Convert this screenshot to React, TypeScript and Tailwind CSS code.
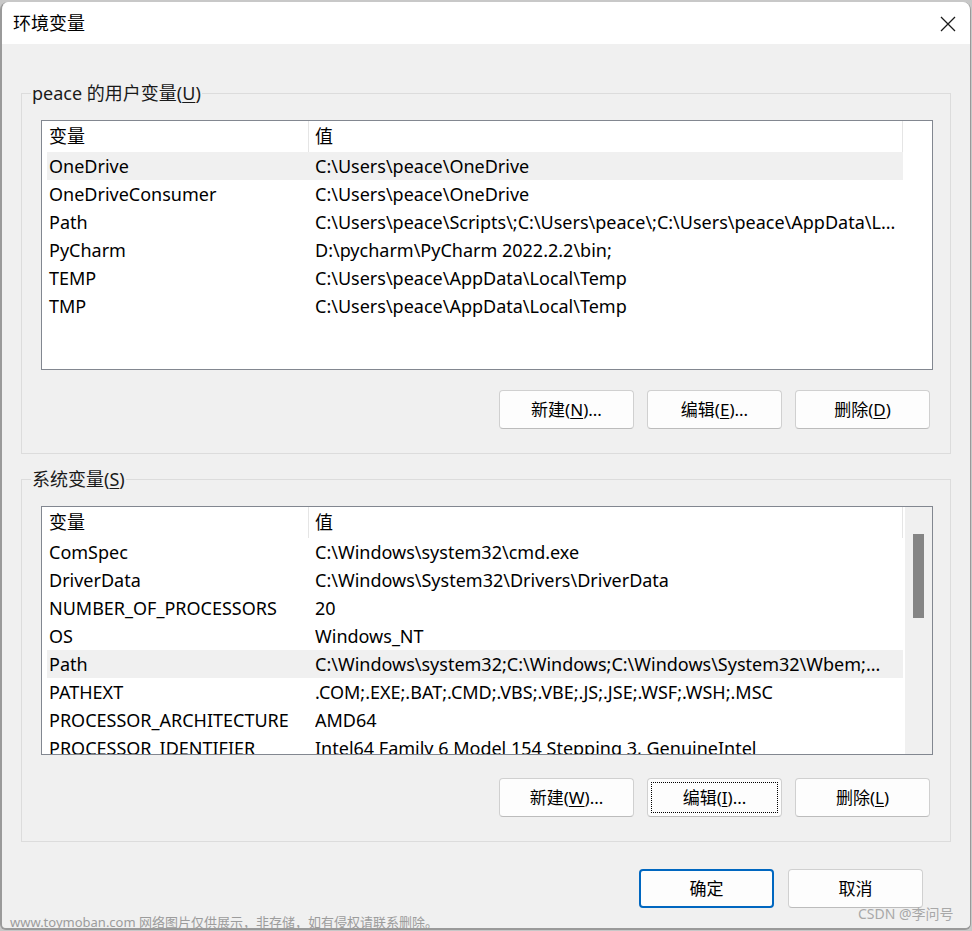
import React from "react";

const font = { fontFamily: '"Noto Sans", "Noto Sans CJK SC", sans-serif' };

type Row = { name: string; value: string };

const userVars: Row[] = [
  { name: "OneDrive", value: "C:\\Users\\peace\\OneDrive" },
  { name: "OneDriveConsumer", value: "C:\\Users\\peace\\OneDrive" },
  { name: "Path", value: "C:\\Users\\peace\\Scripts\\;C:\\Users\\peace\\;C:\\Users\\peace\\AppData\\L..." },
  { name: "PyCharm", value: "D:\\pycharm\\PyCharm 2022.2.2\\bin;" },
  { name: "TEMP", value: "C:\\Users\\peace\\AppData\\Local\\Temp" },
  { name: "TMP", value: "C:\\Users\\peace\\AppData\\Local\\Temp" },
];

const sysVars: Row[] = [
  { name: "ComSpec", value: "C:\\Windows\\system32\\cmd.exe" },
  { name: "DriverData", value: "C:\\Windows\\System32\\Drivers\\DriverData" },
  { name: "NUMBER_OF_PROCESSORS", value: "20" },
  { name: "OS", value: "Windows_NT" },
  { name: "Path", value: "C:\\Windows\\system32;C:\\Windows;C:\\Windows\\System32\\Wbem;..." },
  { name: "PATHEXT", value: ".COM;.EXE;.BAT;.CMD;.VBS;.VBE;.JS;.JSE;.WSF;.WSH;.MSC" },
  { name: "PROCESSOR_ARCHITECTURE", value: "AMD64" },
  { name: "PROCESSOR_IDENTIFIER", value: "Intel64 Family 6 Model 154 Stepping 3, GenuineIntel" },
];

function Key({ k }: { k: string }) {
  return <span className="underline underline-offset-2">{k}</span>;
}

// list view: fixed header, 28px rows, last row may be clipped by the box
function VarList({ rows, selected, scroll }: { rows: Row[]; selected: number; scroll?: boolean }) {
  return (
    <div className={`relative w-[892px] overflow-hidden border border-[#828790] bg-white ${scroll ? "h-[249px]" : "h-[250px]"}`}>
      <div className="flex h-[31px] w-[861px] items-center">
        <div className="w-[266px] pl-[7px]">变量</div>
        <div className="h-full w-px bg-[#e5e5e5]" />
        <div className="flex-1 pl-[6px]">值</div>
        <div className="h-full w-px bg-[#e5e5e5]" />
      </div>
      <div className="ml-[5px] w-[856px]">
        {rows.map((r, i) => (
          <div
            key={r.name}
            className={`flex h-[28px] items-center whitespace-nowrap ${i === selected ? "bg-[#f0f0f0]" : ""}`}
          >
            <div className="w-[268px] pl-[2px]">{r.name}</div>
            <div className="flex-1 overflow-hidden">{r.value}</div>
          </div>
        ))}
      </div>
      {scroll && (
        <div className="absolute right-0 top-0 flex h-full w-[27px] justify-center bg-[#f0f0f0] pt-[27px]">
          <div className="h-[84px] w-[11px] bg-[#858585]" />
        </div>
      )}
    </div>
  );
}

function Btn({ children, focus, primary }: { children: React.ReactNode; focus?: boolean; primary?: boolean }) {
  return (
    <button
      className={`relative flex h-[39px] w-[135px] items-center justify-center rounded-[4px] bg-[#fdfdfd] text-[17px] text-black ${
        primary ? "border-2 border-[#0067c0]" : "border border-[#d0d0d0] border-b-[#bcbcbc]"
      }`}
    >
      {focus && <span className="absolute inset-[3px] border border-dotted border-black" />}
      <span>{children}</span>
    </button>
  );
}

function Group({ label, children }: { label: React.ReactNode; children: React.ReactNode }) {
  return (
    <fieldset className="ml-[19px] w-[930px] border border-[#dcdcdc] pb-[24px] pl-[19px] pr-[17px]">
      <legend className="ml-[-10px] px-[1px] text-[18px] leading-[24px] text-[#1a1a1a]">{label}</legend>
      {children}
    </fieldset>
  );
}

export default function App() {
  return (
    <div className="relative h-[931px] w-[972px] overflow-hidden bg-[#c8c8c8]" style={font}>
      <div className="mt-[2px] flex h-[928px] w-[971px] flex-col overflow-hidden rounded-t-[8px] rounded-b-[6px] border-b-2 border-l-2 border-r border-[#9a9a9a] border-t-0 text-[18px] text-black">
        <div className="flex h-[42px] shrink-0 items-center justify-between bg-white pl-[11px] pr-[14px]">
          <span className="text-[18px]">环境变量</span>
          <svg width="16" height="16" viewBox="0 0 16 16" className="mt-[2px]">
            <path d="M1 1L15 15M15 1L1 15" stroke="#1a1a1a" strokeWidth="1.3" fill="none" />
          </svg>
        </div>
        <div className="flex-1 bg-[#f0f0f0] pt-[37px]">
          <Group
            label={
              <>
                peace 的用户变量(<Key k="U" />)
              </>
            }
          >
            <div className="mt-[15px]">
              <VarList rows={userVars} selected={0} />
            </div>
            <div className="mt-[20px] flex w-[889px] justify-end gap-[13px]">
              <Btn>
                新建(<Key k="N" />)...
              </Btn>
              <Btn>
                编辑(<Key k="E" />)...
              </Btn>
              <Btn>
                删除(<Key k="D" />)
              </Btn>
            </div>
          </Group>
          <div className="h-[13px]" />
          <Group
            label={
              <>
                系统变量(<Key k="S" />)
              </>
            }
          >
            <div className="mt-[15px]">
              <VarList rows={sysVars} selected={4} scroll />
            </div>
            <div className="mt-[23px] flex w-[889px] justify-end gap-[13px]">
              <Btn>
                新建(<Key k="W" />)...
              </Btn>
              <Btn focus>
                编辑(<Key k="I" />)...
              </Btn>
              <Btn>
                删除(<Key k="L" />)
              </Btn>
            </div>
          </Group>
          <div className="mt-[27px] flex w-[921px] justify-end gap-[14px]">
            <Btn primary>确定</Btn>
            <Btn>取消</Btn>
          </div>
        </div>
      </div>
      <div className="absolute left-[10px] top-[913px] text-[13px] text-[#9c9c9c]">
        www.toymoban.com 网络图片仅供展示，非存储，如有侵权请联系删除。
      </div>
      <div className="absolute left-[858px] top-[903px] text-[14px] text-[#a8a8a8]">CSDN @李问号</div>
    </div>
  );
}
